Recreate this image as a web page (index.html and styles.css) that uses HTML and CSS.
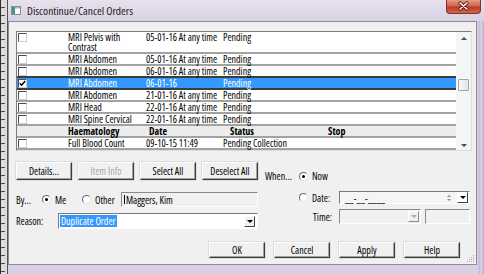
FILE: index.html
```html
<!DOCTYPE html>
<html>
    <head>
        <title>Discontinue/Cancel Orders</title>
        <link rel="stylesheet" href="styles.css">
    </head>
    <body>
        <div class="backdrop"></div>

        <div class="window">
            <div class="titleBar">
                <svg class="appIcon" width="10" height="9" viewBox="0 0 10 9">
                    <rect x="0.5" y="0.5" width="9" height="8" fill="#fbfbfb" stroke="#8c8c8c"/>
                    <rect x="1" y="1" width="3" height="7" fill="#3d9b8e"/>
                    <rect x="4" y="1" width="5" height="1.5" fill="#9cb4d8"/>
                </svg>
                <span class="title">Discontinue/Cancel Orders</span>
                <div class="closeButton">
                    <svg width="35" height="14" viewBox="0 0 35 14">
                        <path d="M14 4 L21 10 M21 4 L14 10" stroke="#5a1a12" stroke-width="3.4" stroke-linecap="round"/>
                        <path d="M14 4 L21 10 M21 4 L14 10" stroke="#ffffff" stroke-width="1.6" stroke-linecap="round"/>
                    </svg>
                </div>
            </div>

            <div class="client">
                <div class="orderList">
                    <div class="rows">
                        <div class="row">
                            <span><span class="check"></span></span>
                            <span>MRI Pelvis with Contrast</span>
                            <span>05-01-16 At any time</span>
                            <span>Pending</span>
                        </div>
                        <div class="row">
                            <span><span class="check"></span></span>
                            <span>MRI Abdomen</span>
                            <span>05-01-16 At any time</span>
                            <span>Pending</span>
                        </div>
                        <div class="row">
                            <span><span class="check"></span></span>
                            <span>MRI Abdomen</span>
                            <span>06-01-16 At any time</span>
                            <span>Pending</span>
                        </div>
                        <div class="row selected">
                            <span>
                                <span class="check">
                                    <svg width="7" height="7" viewBox="0 0 7 7"><path d="M0.8 3.2 L2.6 5.2 L6.2 1" fill="none" stroke="#000" stroke-width="1.5"/></svg>
                                </span>
                            </span>
                            <span>MRI Abdomen</span>
                            <span>06-01-16</span>
                            <span>Pending</span>
                        </div>
                        <div class="row">
                            <span><span class="check"></span></span>
                            <span>MRI Abdomen</span>
                            <span>21-01-16 At any time</span>
                            <span>Pending</span>
                        </div>
                        <div class="row">
                            <span><span class="check"></span></span>
                            <span>MRI Head</span>
                            <span>22-01-16 At any time</span>
                            <span>Pending</span>
                        </div>
                        <div class="row">
                            <span><span class="check"></span></span>
                            <span>MRI Spine Cervical</span>
                            <span>22-01-16 At any time</span>
                            <span>Pending</span>
                        </div>
                        <div class="row headRow">
                            <span></span>
                            <span>Haematology</span>
                            <span>Date</span>
                            <span>Status</span>
                            <span>Stop</span>
                        </div>
                        <div class="row">
                            <span><span class="check"></span></span>
                            <span>Full Blood Count</span>
                            <span>09-10-15 11:49</span>
                            <span>Pending Collection</span>
                        </div>
                        <div class="row">
                            <span><span class="check"></span></span>
                            <span></span>
                            <span></span>
                            <span></span>
                        </div>
                    </div>
                    <div class="scrollBar">
                        <span class="arrowUp"></span>
                        <span class="thumb"></span>
                        <span class="arrowDown"></span>
                    </div>
                </div>

                <div class="controls">
                    <div class="leftPane">
                        <div class="buttonRow">
                            <div class="button">Details...</div>
                            <div class="button disabled">Item Info</div>
                            <div class="button">Select All</div>
                            <div class="button">Deselect All</div>
                        </div>
                        <div class="byRow">
                            <span class="byLabel">By...</span>
                            <span class="option meOption"><span class="radio on"></span>Me</span>
                            <span class="option otherOption"><span class="radio"></span>Other</span>
                            <span class="textBox"><span class="caret"></span>Maggers, Kim</span>
                        </div>
                        <div class="reasonRow">
                            <span class="reasonLabel">Reason:</span>
                            <span class="combo">
                                <span class="picked">Duplicate Order</span>
                                <span class="dropButton"><span class="arrow"></span></span>
                            </span>
                        </div>
                    </div>

                    <div class="rightPane">
                        <div class="whenRow">
                            <span class="whenLabel">When...</span>
                            <span class="option"><span class="radio on"></span>Now</span>
                        </div>
                        <div class="dateRow">
                            <span class="option dateOption"><span class="radio"></span>Date:</span>
                            <span class="dateField">
                                <span class="mask">__-__-____</span>
                                <span class="spin">
                                    <span class="spinUp"></span>
                                    <span class="spinDown"></span>
                                </span>
                                <span class="dropButton"><span class="arrow"></span></span>
                            </span>
                        </div>
                        <div class="timeRow">
                            <span class="timeLabel">Time:</span>
                            <span class="timeCombo">
                                <span class="dropButton off"><span class="arrow"></span></span>
                            </span>
                            <span class="timeBox"></span>
                        </div>
                    </div>
                </div>

                <div class="dialogButtons">
                    <div class="button small">OK</div>
                    <div class="button small">Cancel</div>
                    <div class="button small">Apply</div>
                    <div class="button small">Help</div>
                </div>

                <svg class="sizeGrip" width="10" height="10" viewBox="0 0 10 10">
                    <g fill="#a8a8a8">
                        <rect x="8" y="2" width="1" height="1"/>
                        <rect x="6" y="4" width="1" height="1"/><rect x="8" y="4" width="1" height="1"/>
                        <rect x="4" y="6" width="1" height="1"/><rect x="6" y="6" width="1" height="1"/><rect x="8" y="6" width="1" height="1"/>
                        <rect x="2" y="8" width="1" height="1"/><rect x="4" y="8" width="1" height="1"/><rect x="6" y="8" width="1" height="1"/><rect x="8" y="8" width="1" height="1"/>
                    </g>
                </svg>
            </div>
        </div>
    </body>
</html>
```

FILE: styles.css
```css
body {
    margin: 0;
    width: 484px;
    height: 274px;
    overflow: hidden;
    display: flex;
    font-family: "Open Sans", "Liberation Sans", Arial, sans-serif;
    font-stretch: 79%;
    font-size: 10px;
    color: #000;
    background-color: #3a3a3a;
}
.backdrop {
    width: 6px;
    border-left: 1px solid #2e2e2e;
    background-color: #dcdcdc;
    background-image: repeating-linear-gradient(to bottom, transparent 0 7px, #4a4a4a 7px 8px);
    background-size: 4px 100%;
    background-repeat: no-repeat;
}
.window {
    flex: 1;
    display: flex;
    flex-direction: column;
    background: linear-gradient(to right, #d9d0e4 0, #d9d0e4 470px, #c6b5d6 471px, #ddd2e6 473px, #bda9cf 476px);
    border-left: 1px solid #55525c;
}
.titleBar {
    height: 21px;
    display: flex;
    align-items: center;
    background: linear-gradient(#e7e2ee, #d8d0e3);
}
.appIcon {
    margin: 0 6px 0 3px;
}
.title {
    font-size: 11.5px;
    font-stretch: 75%;
    color: #1c1c1c;
}
.closeButton {
    margin-left: auto;
    margin-right: 3px;
    align-self: flex-start;
    width: 35px;
    height: 14px;
    box-sizing: border-box;
    border: 1px solid #7e3328;
    border-top: none;
    border-radius: 0 0 4px 4px;
    background: linear-gradient(#e49a88, #d0644f 45%, #bb3a26 55%, #cf6650);
}
.closeButton svg {
    display: block;
    margin: -1px 0 0 -1px;
}
.client {
    flex: 1;
    position: relative;
    display: flex;
    flex-direction: column;
    margin: 0 7px 9px 0;
    padding: 9px 4px 0 7px;
    border: 1px solid #8f8a9a;
    background-color: #f0f0f0;
}
.orderList {
    width: 456px;
    height: 120px;
    box-sizing: border-box;
    display: flex;
    border: 1px solid;
    border-color: #7c7c7c #dcdcdc #dcdcdc #7c7c7c;
    background-color: #fff;
    overflow: hidden;
}
.rows {
    flex: 1;
    overflow: hidden;
}
.row {
    display: grid;
    grid-template-columns: 51px 78px 77px 1fr;
    height: 10px;
    line-height: 10px;
    border-bottom: 2px solid #a2a2a2;
    white-space: nowrap;
}
.row:first-child {
    height: 20px;
}
.row > span:nth-child(2) {
    white-space: normal;
}
.selected {
    margin-top: -2px;
    border-top: 2px solid #3c3c3c;
    border-bottom-color: #3c3c3c;
    background-color: #3399ff;
    color: #fff;
}
.headRow {
    grid-template-columns: 51px 81px 81px 98px 1fr;
    font-weight: bold;
    background-color: #ececec;
}
.check {
    display: block;
    width: 9px;
    height: 9px;
    box-sizing: border-box;
    margin: 1px 0 0 1px;
    border: 1px solid;
    border-color: #4e4e4e #cfcfcf #cfcfcf #4e4e4e;
    background-color: #fff;
}
.check svg {
    display: block;
}
.scrollBar {
    width: 15px;
    display: flex;
    flex-direction: column;
    align-items: center;
    background-color: #f5f5f5;
}
.arrowUp {
    margin-top: 5px;
    border-left: 3px solid transparent;
    border-right: 3px solid transparent;
    border-bottom: 3px solid #4a4a4a;
}
.arrowDown {
    margin-top: auto;
    margin-bottom: 3px;
    border-left: 3px solid transparent;
    border-right: 3px solid transparent;
    border-top: 3px solid #4a4a4a;
}
.thumb {
    width: 11px;
    height: 12px;
    box-sizing: border-box;
    margin-top: 39px;
    border: 1px solid #a4a4a4;
    border-radius: 1px;
    background: linear-gradient(to right, #f8f8f8, #e4e4e4);
}
.controls {
    display: flex;
    gap: 7px;
    margin-top: 11px;
}
.leftPane {
    width: 242px;
    display: flex;
    flex-direction: column;
}
.buttonRow {
    display: flex;
    gap: 6px;
}
.button {
    width: 56px;
    height: 18px;
    box-sizing: border-box;
    display: flex;
    align-items: center;
    justify-content: center;
    border: 1px solid;
    border-color: #fff #3c3c3c #3c3c3c #fff;
    box-shadow: inset -1px -1px #a0a0a0, 0 0 0 0.5px #c8c8c8;
    background-color: #f0f0f0;
    white-space: nowrap;
}
.small {
    height: 16px;
}
.disabled {
    color: #a3a3a3;
    text-shadow: 1px 1px #fff;
}
.byRow {
    display: flex;
    align-items: center;
    height: 15px;
    margin-top: 12px;
}
.byLabel {
    width: 26px;
}
.option {
    display: flex;
    align-items: center;
    gap: 4px;
}
.meOption {
    width: 40px;
}
.otherOption {
    width: 39px;
}
.radio {
    width: 9px;
    height: 9px;
    box-sizing: border-box;
    border-radius: 50%;
    border: 1px solid;
    border-color: #6a6a6a #e4e4e4 #e4e4e4 #6a6a6a;
    background-color: #fff;
}
.radio.on::after {
    content: "";
    display: block;
    width: 3px;
    height: 3px;
    margin: 2px;
    border-radius: 50%;
    background-color: #000;
}
.textBox {
    flex: 1;
    height: 15px;
    box-sizing: border-box;
    display: flex;
    align-items: center;
    padding-left: 2px;
    border: 1px solid;
    border-color: #8a8a8a #fff #fff #8a8a8a;
    background-color: #f0f0f0;
}
.caret {
    width: 1px;
    height: 9px;
    margin-right: 1px;
    background-color: #000;
}
.reasonRow {
    display: flex;
    align-items: center;
    height: 16px;
    margin-top: 6px;
}
.reasonLabel {
    width: 42px;
}
.combo {
    flex: 1;
    height: 16px;
    box-sizing: border-box;
    display: flex;
    align-items: center;
    padding: 0 2px 0 1px;
    border: 1px solid;
    border-color: #7a7a7a #fff #fff #7a7a7a;
    background-color: #fff;
}
.picked {
    padding: 0 1px;
    line-height: 12px;
    background-color: #3399ff;
    color: #fff;
}
.dropButton {
    margin-left: auto;
    width: 11px;
    height: 11px;
    box-sizing: border-box;
    display: flex;
    align-items: center;
    justify-content: center;
    border: 1px solid;
    border-color: #fff #404040 #404040 #fff;
    background-color: #f0f0f0;
}
.arrow {
    border-left: 3px solid transparent;
    border-right: 3px solid transparent;
    border-top: 3px solid #000;
}
.dropButton.off {
    border-color: #fff #8c8c8c #8c8c8c #fff;
}
.dropButton.off .arrow {
    border-top-color: #a8a8a8;
}
.rightPane {
    display: flex;
    flex-direction: column;
    padding-top: 7px;
}
.whenRow {
    display: flex;
    align-items: center;
    height: 14px;
}
.whenLabel {
    width: 34px;
}
.dateRow {
    display: flex;
    align-items: center;
    height: 13px;
    margin-top: 8px;
    padding-left: 34px;
}
.dateOption {
    width: 40px;
}
.dateField {
    width: 131px;
    height: 13px;
    box-sizing: border-box;
    display: flex;
    align-items: center;
    padding: 0 1px 0 5px;
    border: 1px solid;
    border-color: #7a7a7a #fff #fff #7a7a7a;
    background-color: #f5f5f5;
}
.mask {
    line-height: 10px;
}
.spin {
    margin-left: auto;
    width: 10px;
    display: flex;
    flex-direction: column;
    align-items: center;
    gap: 2px;
    margin-right: 3px;
}
.spinUp {
    border-left: 2px solid transparent;
    border-right: 2px solid transparent;
    border-bottom: 2px solid #8a8a8a;
}
.spinDown {
    border-left: 2px solid transparent;
    border-right: 2px solid transparent;
    border-top: 2px solid #8a8a8a;
}
.dateField .dropButton {
    margin-left: 0;
    background-color: #fff;
}
.timeRow {
    display: flex;
    align-items: center;
    height: 15px;
    margin-top: 5px;
    padding-left: 34px;
}
.timeLabel {
    width: 40px;
    box-sizing: border-box;
    padding-right: 7px;
    text-align: right;
}
.timeCombo {
    width: 82px;
    height: 15px;
    box-sizing: border-box;
    display: flex;
    align-items: center;
    padding-right: 1px;
    border: 1px solid;
    border-color: #8a8a8a #fff #fff #8a8a8a;
    background-color: #f0f0f0;
}
.timeBox {
    width: 45px;
    height: 15px;
    box-sizing: border-box;
    margin-left: 4px;
    border: 1px solid;
    border-color: #8a8a8a #fff #fff #8a8a8a;
    background-color: #f0f0f0;
}
.dialogButtons {
    display: flex;
    justify-content: flex-end;
    gap: 9px;
    margin-top: 13px;
    padding-right: 12px;
}
.sizeGrip {
    position: absolute;
    right: 1px;
    bottom: 1px;
}
```
